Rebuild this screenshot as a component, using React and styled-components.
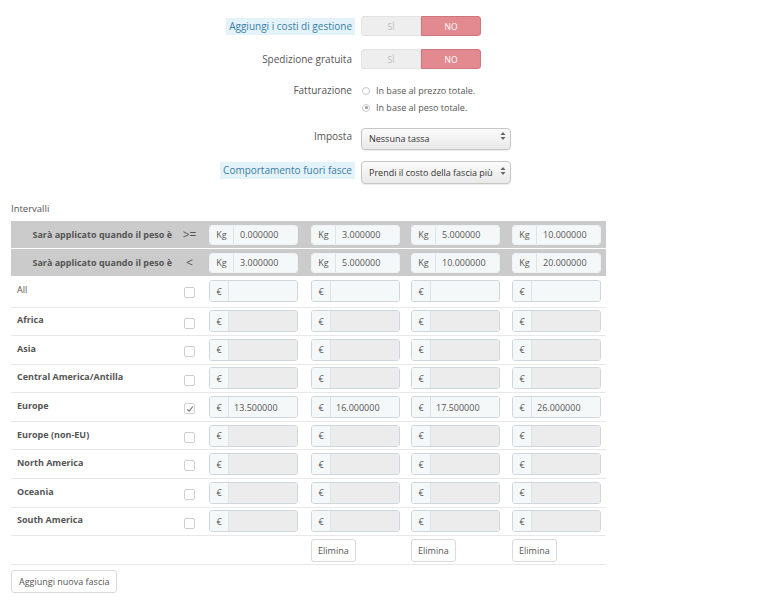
import React from "react";
import styled, { createGlobalStyle, css } from "styled-components";

const GlobalStyle = createGlobalStyle`
  html, body { margin: 0; padding: 0; background: #fff; }
  body { font-family: "Open Sans", "Liberation Sans", sans-serif; color: #555; }
  * { box-sizing: border-box; }
`;

const Page = styled.div`
  width: 781px;
  padding: 16px 11px 0 11px;
`;

const Form = styled.div`
  display: flex;
  flex-direction: column;
`;

const FormRow = styled.div`
  display: grid;
  grid-template-columns: 341px 1fr;
  column-gap: 9px;
  align-items: ${(p) => (p.$top ? "start" : "center")};
  margin-bottom: ${(p) => p.$mb ?? 13}px;
`;

const Label = styled.div`
  justify-self: end;
  font-size: 10px;
  line-height: 17px;
  color: #555;
  ${(p) =>
    p.$hint &&
    css`
      background: #e4f2f9;
      color: #3a7fa5;
      padding: 0 3px;
      margin-right: -3px;
    `}
`;

const Toggle = styled.div`
  display: flex;
  width: 120px;
  height: 20px;
`;

const ToggleOption = styled.div`
  flex: 1;
  display: flex;
  align-items: center;
  justify-content: center;
  font-size: 8.5px;
  border: 1px solid;
  ${(p) =>
    p.$active
      ? css`
          background: #e38a91;
          border-color: #cf767e;
          color: #fff;
          border-radius: 0 3px 3px 0;
        `
      : css`
          background: #eeeeee;
          border-color: #e3e3e3;
          color: #bdbdbd;
          border-radius: 3px 0 0 3px;
        `}
`;

const RadioList = styled.div`
  display: flex;
  flex-direction: column;
`;

const RadioOption = styled.label`
  display: flex;
  align-items: center;
  gap: 6px;
  height: 17px;
  font-size: 9px;
  color: #555;
  padding-left: 1px;
`;

const RadioDot = styled.span`
  width: 8px;
  height: 8px;
  border-radius: 50%;
  border: 1px solid #c9c9c9;
  background: #fff;
  display: inline-flex;
  align-items: center;
  justify-content: center;
  &::after {
    content: "";
    width: 3px;
    height: 3px;
    border-radius: 50%;
    background: ${(p) => (p.$checked ? "#9a9a9a" : "transparent")};
  }
`;

const SelectWrap = styled.div`
  position: relative;
  width: 150px;
  height: ${(p) => p.$h}px;
`;

const Select = styled.select`
  appearance: none;
  -webkit-appearance: none;
  width: 100%;
  height: 100%;
  border: 1px solid #c6c6c6;
  border-radius: 4px;
  background: linear-gradient(#fbfbfb, #e9e9e9);
  box-shadow: 0 1px 1px rgba(0, 0, 0, 0.08);
  font-family: "Open Sans", "Liberation Sans", sans-serif;
  font-size: 9px;
  color: #333;
  padding: 0 16px 0 7px;
  outline: none;
`;

const SelectArrow = styled.svg`
  position: absolute;
  right: 5px;
  top: 50%;
  transform: translateY(-50%);
  pointer-events: none;
`;

const SectionTitle = styled.div`
  font-size: 9.5px;
  line-height: 14px;
  color: #555;
  margin-top: 5px;
  margin-bottom: 5px;
`;

const Table = styled.table`
  border-collapse: collapse;
  table-layout: fixed;
  width: 595px;
`;

const Col = styled.col`
  width: ${(p) => p.$w}px;
`;

const HeadRow = styled.tr`
  height: 27.5px;
  background: #cbcbcb;
  border-bottom: ${(p) => (p.$sep ? "1px solid #fff" : "none")};
`;

const HeadLabel = styled.th`
  text-align: right;
  padding: 0 6px 0 0;
  font-size: 9px;
  font-weight: 700;
  color: #555;
  white-space: nowrap;
`;

const HeadSign = styled.th`
  text-align: center;
  font-size: 12px;
  font-weight: 400;
  color: #555;
  padding: 0 4px 0 0;
`;

const Cell = styled.td`
  padding: 0 0 0 4px;
  vertical-align: middle;
`;

const BodyRow = styled.tr`
  height: ${(p) => p.$h ?? 28.6}px;
  border-bottom: 1px solid #e8e8e8;
`;

const RegionLabel = styled.td`
  padding: 0 0 3px 6px;
  font-size: 9px;
  font-weight: ${(p) => (p.$bold ? 700 : 400)};
  color: #555;
  vertical-align: middle;
  white-space: nowrap;
  line-height: 1;
`;

const CheckCell = styled.td`
  text-align: center;
  padding: 0 4px 0 0;
  vertical-align: middle;
`;

const Checkbox = styled.span`
  display: inline-flex;
  align-items: center;
  justify-content: center;
  width: 11px;
  height: 11px;
  border: 1px solid #cfcfcf;
  border-radius: 2px;
  background: #fff;
  vertical-align: middle;
`;

const InputGroup = styled.div`
  display: flex;
  width: 89px;
  height: ${(p) => (p.$head ? 20 : 22)}px;
  border: 1px solid ${(p) => (p.$head ? "#eef2f4" : "#cfd7db")};
  border-radius: 3px;
  overflow: hidden;
`;

const Addon = styled.span`
  flex: 0 0 ${(p) => p.$w}px;
  display: flex;
  align-items: center;
  justify-content: center;
  background: #f5f8f9;
  border-right: 1px solid #dde4e7;
  font-size: 9px;
  color: #555;
`;

const Field = styled.span`
  flex: 1;
  display: flex;
  align-items: center;
  padding-left: ${(p) => p.$pl}px;
  font-size: 9px;
  color: #555;
  background: ${(p) => (p.$disabled ? "#ececec" : "#f5f8f9")};
`;

const Button = styled.button`
  height: 23px;
  padding: 0 6px;
  border: 1px solid #dadada;
  border-radius: 3px;
  background: #fff;
  font-family: "Open Sans", "Liberation Sans", sans-serif;
  font-size: 9px;
  color: #555;
  cursor: pointer;
  vertical-align: middle;
`;

const AddButton = styled(Button)`
  display: block;
  margin-top: 5px;
  padding: 0 7px;
`;

const from = ["0.000000", "3.000000", "5.000000", "10.000000"];
const to = ["3.000000", "5.000000", "10.000000", "20.000000"];

const regions = [
  { name: "All", bold: false, disabled: false, values: ["", "", "", ""] },
  { name: "Africa", bold: true, disabled: true, values: ["", "", "", ""] },
  { name: "Asia", bold: true, disabled: true, values: ["", "", "", ""] },
  { name: "Central America/Antilla", bold: true, disabled: true, values: ["", "", "", ""] },
  { name: "Europe", bold: true, disabled: false, checked: true, values: ["13.500000", "16.000000", "17.500000", "26.000000"] },
  { name: "Europe (non-EU)", bold: true, disabled: true, values: ["", "", "", ""] },
  { name: "North America", bold: true, disabled: true, values: ["", "", "", ""] },
  { name: "Oceania", bold: true, disabled: true, values: ["", "", "", ""] },
  { name: "South America", bold: true, disabled: true, values: ["", "", "", ""] },
];

const Arrows = () => (
  <SelectArrow width="6" height="9" viewBox="0 0 6 9">
    <path d="M3 0.5 L5.5 3.5 H0.5 Z" fill="#666" />
    <path d="M3 8.5 L5.5 5.5 H0.5 Z" fill="#666" />
  </SelectArrow>
);

const Check = () => (
  <svg width="8" height="8" viewBox="0 0 8 8">
    <path d="M1.3 4.3 L3.2 6.2 L6.8 1.5" fill="none" stroke="#777" strokeWidth="1.2" />
  </svg>
);

const YesNo = () => (
  <Toggle>
    <ToggleOption>SÌ</ToggleOption>
    <ToggleOption $active>NO</ToggleOption>
  </Toggle>
);

export default function App() {
  return (
    <Page>
      <GlobalStyle />
      <Form>
        <FormRow>
          <Label $hint>Aggiungi i costi di gestione</Label>
          <YesNo />
        </FormRow>
        <FormRow>
          <Label>Spedizione gratuita</Label>
          <YesNo />
        </FormRow>
        <FormRow $top $mb={9}>
          <Label>Fatturazione</Label>
          <RadioList>
            <RadioOption>
              <RadioDot />
              In base al prezzo totale.
            </RadioOption>
            <RadioOption>
              <RadioDot $checked />
              In base al peso totale.
            </RadioOption>
          </RadioList>
        </FormRow>
        <FormRow $mb={12}>
          <Label>Imposta</Label>
          <SelectWrap $h={22}>
            <Select defaultValue="0">
              <option value="0">Nessuna tassa</option>
            </Select>
            <Arrows />
          </SelectWrap>
        </FormRow>
        <FormRow $mb={15}>
          <Label $hint>Comportamento fuori fasce</Label>
          <SelectWrap $h={23}>
            <Select defaultValue="0">
              <option value="0">Prendi il costo della fascia più alta</option>
            </Select>
            <Arrows />
          </SelectWrap>
        </FormRow>
      </Form>

      <SectionTitle>Intervalli</SectionTitle>

      <Table>
        <colgroup>
          <Col $w={167} />
          <Col $w={27} />
          <Col $w={102} />
          <Col $w={100} />
          <Col $w={101} />
          <Col $w={98} />
        </colgroup>
        <tbody>
          <HeadRow $sep>
            <HeadLabel>Sarà applicato quando il peso è</HeadLabel>
            <HeadSign>&gt;=</HeadSign>
            {from.map((v, i) => (
              <Cell key={i}>
                <InputGroup $head>
                  <Addon $w={24}>Kg</Addon>
                  <Field $pl={6}>{v}</Field>
                </InputGroup>
              </Cell>
            ))}
          </HeadRow>
          <HeadRow>
            <HeadLabel>Sarà applicato quando il peso è</HeadLabel>
            <HeadSign>&lt;</HeadSign>
            {to.map((v, i) => (
              <Cell key={i}>
                <InputGroup $head>
                  <Addon $w={24}>Kg</Addon>
                  <Field $pl={6}>{v}</Field>
                </InputGroup>
              </Cell>
            ))}
          </HeadRow>
          {regions.map((r, idx) => (
            <BodyRow key={r.name} $h={idx === 0 ? 31 : undefined}>
              <RegionLabel $bold={r.bold}>{r.name}</RegionLabel>
              <CheckCell>
                <Checkbox>{r.checked && <Check />}</Checkbox>
              </CheckCell>
              {r.values.map((v, i) => (
                <Cell key={i}>
                  <InputGroup>
                    <Addon $w={19}>€</Addon>
                    <Field $pl={5} $disabled={r.disabled}>{v}</Field>
                  </InputGroup>
                </Cell>
              ))}
            </BodyRow>
          ))}
          <BodyRow>
            <td />
            <td />
            <td />
            {[0, 1, 2].map((i) => (
              <Cell key={i}>
                <Button>Elimina</Button>
              </Cell>
            ))}
          </BodyRow>
        </tbody>
      </Table>

      <AddButton>Aggiungi nuova fascia</AddButton>
    </Page>
  );
}
